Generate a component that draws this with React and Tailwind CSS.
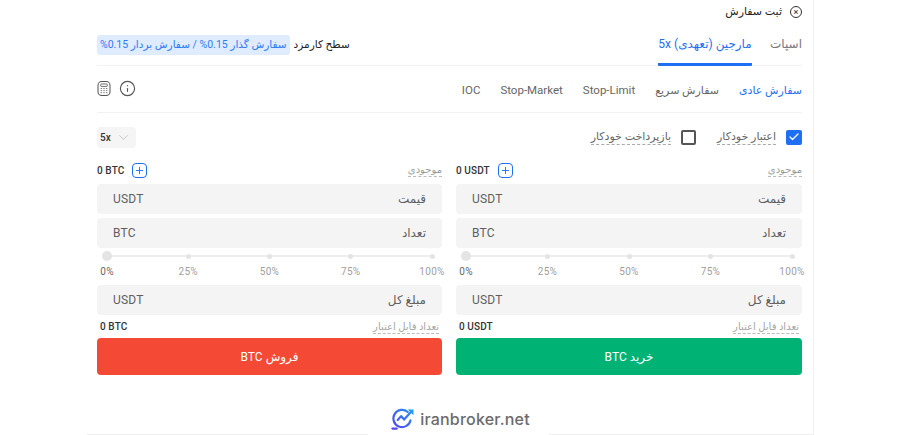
import React from "react";
import { ChevronDown, Check, Plus, Info } from "lucide-react";

const fa = { fontFamily: 'Roboto, "DejaVu Sans", sans-serif' };

const Field = ({ label, unit }) => (
  <div className="flex items-center justify-between h-[30px] bg-[#f4f4f4] rounded px-4 text-[12px] text-[#5f5f5f]">
    <span>{label}</span>
    <span className="tracking-[0.2px]">{unit}</span>
  </div>
);

const Slider = () => {
  const marks = ["100%", "75%", "50%", "25%", "0%"];
  return (
    <div className="h-[37px] pt-[3px]">
      <div className="relative h-[10px]">
        <div className="absolute left-[9px] right-[9px] top-[4px] h-[2px] bg-[#eeeeee]" />
        <div className="relative flex items-center justify-between h-[10px] mx-[10px]">
          {marks.map((m) => (
            <div key={m} className="w-0 flex justify-center">
              <div className={m === "0%" ? "shrink-0 w-[10px] h-[10px] rounded-full bg-[#e4e4e4]" : "shrink-0 w-[5px] h-[5px] rounded-full bg-[#e4e4e4]"} />
            </div>
          ))}
        </div>
      </div>
      <div className="flex justify-between mx-[10px] mt-[4px] text-[10px] leading-[14px] text-[#a0a0a0] tracking-[0.3px]">
        {marks.map((m) => (
          <div key={m} className="w-0 flex justify-center">
            <span className={m === "0%" ? "text-[#666666]" : ""} dir="ltr">
              {m}
            </span>
          </div>
        ))}
      </div>
    </div>
  );
};

const OrderForm = ({ balance, action, btnClass, widthClass }) => (
  <div className={`min-w-0 ${widthClass}`}>
    <div className="flex items-center justify-between h-[20px] mb-[4px]">
      <span className="text-[10px] leading-[13px] text-[#9a9a9a] border-b border-dashed border-[#bbbbbb]">موجودی</span>
      <div className="flex items-center gap-2" dir="ltr">
        <span className="font-medium text-[10px] tracking-[0.1px] text-[#333333]">{balance}</span>
        <span className="w-[15px] h-[15px] rounded-[4px] border border-[#1f6ff5] flex items-center justify-center text-[#1f6ff5]">
          <Plus size={11} strokeWidth={2} />
        </span>
      </div>
    </div>
    <div className="flex flex-col gap-[4px]">
      <Field label="قیمت" unit="USDT" />
      <Field label="تعداد" unit="BTC" />
    </div>
    <Slider />
    <Field label="مبلغ کل" unit="USDT" />
    <div className="flex items-center justify-between h-[23px] px-[3px]">
      <span className="text-[10px] leading-[13px] text-[#a5a5a5] border-b border-dashed border-[#bbbbbb]">تعداد قابل اعتبار</span>
      <span className="font-medium text-[10px] tracking-[0.1px] text-[#333333]" dir="ltr">{balance}</span>
    </div>
    <button className={`w-full h-[37px] rounded text-white text-[12px] ${btnClass}`}>{action}</button>
  </div>
);

const Logo = () => (
  <svg width="23" height="23" viewBox="0 0 24 24" fill="none">
    <defs>
      <linearGradient id="lg" x1="0" y1="24" x2="24" y2="0" gradientUnits="userSpaceOnUse">
        <stop offset="0" stopColor="#5a3df0" />
        <stop offset="1" stopColor="#1f9cf0" />
      </linearGradient>
    </defs>
    <path d="M17.5 5.2A9 9 0 1 0 20.3 14" stroke="url(#lg)" strokeWidth="2.3" strokeLinecap="round" />
    <path d="M7 13.5 10.5 9.5l3.2 3.6L21.5 4.5" stroke="url(#lg)" strokeWidth="2.3" strokeLinecap="round" strokeLinejoin="round" />
    <path d="M17.5 2.5h6V8.5z" fill="#1f9cf0" />
    <path d="M1.5 22.5h4.5" stroke="url(#lg)" strokeWidth="2.3" strokeLinecap="round" />
  </svg>
);

export default function App() {
  return (
    <div className="w-[900px] h-[435px] bg-white overflow-hidden" style={fa}>
      <div dir="rtl" className="ml-[87px] w-[727px] h-[435px] flex flex-col border-r border-[#f0f0f0]">
        <div className="flex-1 pr-[11px] pl-[10px]">
          <div className="flex items-center gap-[8px] h-[24px] text-[11px] text-[#222222]">
            <span className="w-[12px] h-[12px] rounded-full border border-[#333333] flex items-center justify-center text-[9px] leading-none">×</span>
            <span>ثبت سفارش</span>
          </div>

          <div className="flex items-center justify-between h-[42px] border-b border-[#f2f2f2]">
            <div className="flex h-full gap-[18px] text-[12px]">
              <span className="flex items-center pb-[2px] text-[#777777]">اسپات</span>
              <span className="flex items-center text-[#1f6ff5] border-b-[3px] border-[#1f6ff5] rounded-b-[1px] w-[94px] justify-center -mb-[1px]">
                مارجین (تعهدی) 5x
              </span>
            </div>
            <div className="flex items-center gap-[4px] text-[10.5px]">
              <span className="font-medium text-[#222222]">سطح کارمزد</span>
              <span className="bg-[#dfecff] text-[#2e7bf6] rounded-[3px] h-[20px] px-[3px] flex items-center whitespace-nowrap">
                سفارش گذار 0.15% / سفارش بردار 0.15%
              </span>
            </div>
          </div>

          <div className="flex items-center justify-between h-[47px] pt-[4px] border-b border-[#f2f2f2]">
            <div className="flex items-center gap-[20px] text-[11px] text-[#666666]">
              <span className="text-[#1f6ff5]">سفارش عادی</span>
              <span>سفارش سریع</span>
              <span className="text-[11.5px]">Stop-Limit</span>
              <span className="text-[11.5px]">Stop-Market</span>
              <span className="text-[11.5px]">IOC</span>
            </div>
            <div className="flex items-center gap-[8px] pb-[6px] text-[#555555]">
              <Info size={17} strokeWidth={1.6} />
              <svg width="14" height="15" viewBox="0 0 14 16" fill="none" stroke="currentColor">
                <rect x="0.6" y="0.6" width="12.8" height="14.8" rx="4" strokeWidth="1.1" />
                <rect x="3.5" y="3.2" width="7" height="2.6" rx="0.6" strokeWidth="0.9" />
                <path d="M3.5 8h1.2M6.4 8h1.2M9.3 8h1.2M3.5 10.2h1.2M6.4 10.2h1.2M9.3 10.2h1.2M3.5 12.4h1.2M6.4 12.4h1.2M9.3 12.4h1.2" strokeWidth="1" />
              </svg>
            </div>
          </div>

          <div className="flex items-center justify-between h-[48px]">
            <div className="flex items-center text-[11px] text-[#666666]">
              <span className="w-[16px] h-[15px] rounded-[2px] bg-[#1f6ff5] flex items-center justify-center text-white">
                <Check size={12} strokeWidth={2.5} />
              </span>
              <span className="mr-[10px] border-b border-dashed border-[#aaaaaa] leading-[15px]">اعتبار خودکار</span>
              <span className="mr-[21px] w-[15px] h-[15px] rounded-[2px] border-2 border-[#555555]" />
              <span className="mr-[10px] border-b border-dashed border-[#aaaaaa] leading-[15px]">بازپرداخت خودکار</span>
            </div>
            <div dir="ltr" className="flex items-center gap-[5px] w-[39px] h-[21px] bg-[#f5f5f5] rounded pl-[3px] text-[10px] text-[#333333] font-medium">
              <span>5x</span>
              <ChevronDown size={15} strokeWidth={1} className="text-[#aaaaaa]" />
            </div>
          </div>

          <div className="flex gap-[14px] -mt-[1px]">
            <OrderForm balance="0 USDT" action="خرید BTC" btnClass="bg-[#00b274]" widthClass="w-[346px]" />
            <OrderForm balance="0 BTC" action="فروش BTC" btnClass="bg-[#f44a35]" widthClass="w-[345px]" />
          </div>
        </div>

        <div className="flex items-end h-[60px]">
          <div className="flex-1 border-b border-[#eeeeee]" />
          <div dir="ltr" className="w-[181px] flex items-center justify-center gap-[6px] pl-[4px] pb-[5px]">
            <Logo />
            <span className="font-['Inter'] font-medium text-[16px] leading-[22px] tracking-[0.2px] text-[#6b6b6b]">iranbroker.net</span>
          </div>
          <div className="w-[281px] border-b border-[#eeeeee]" />
        </div>
      </div>
    </div>
  );
}
